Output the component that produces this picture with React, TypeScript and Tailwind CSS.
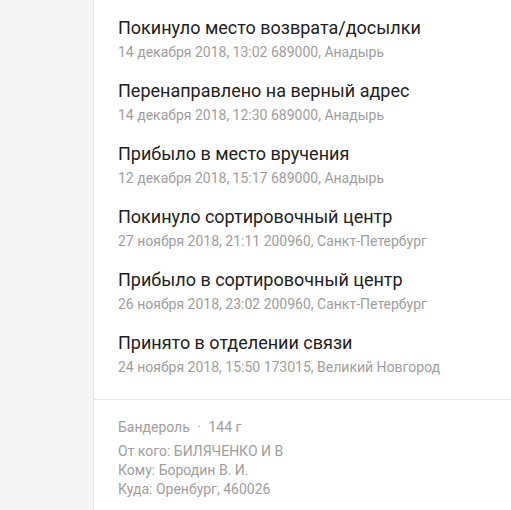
import React from 'react';

interface TrackEvent {
  title: string;
  details: string;
}

const events: TrackEvent[] = [
  { title: 'Покинуло место возврата/досылки', details: '14 декабря 2018, 13:02 689000, Анадырь' },
  { title: 'Перенаправлено на верный адрес', details: '14 декабря 2018, 12:30 689000, Анадырь' },
  { title: 'Прибыло в место вручения', details: '12 декабря 2018, 15:17 689000, Анадырь' },
  { title: 'Покинуло сортировочный центр', details: '27 ноября 2018, 21:11 200960, Санкт-Петербург' },
  { title: 'Прибыло в сортировочный центр', details: '26 ноября 2018, 23:02 200960, Санкт-Петербург' },
  { title: 'Принято в отделении связи', details: '24 ноября 2018, 15:50 173015, Великий Новгород' },
];

const App: React.FC = () => {
  return (
    <div className="flex min-h-[510px] w-full bg-white font-['Roboto',sans-serif]">
      <aside className="w-[94px] shrink-0 border-r border-[#e6e6e6] bg-[#f5f5f5]" />

      <main className="flex-1">
        <ul className="flex flex-col gap-[21px] px-[24px] pt-[18px] pb-[24px]">
          {events.map((event) => (
            <li key={event.title} className="flex flex-col gap-[6px]">
              <span className="text-[18px] leading-[20px] text-[#212121]">{event.title}</span>
              <span className="text-[14px] leading-[16px] text-[#9e9e9e]">{event.details}</span>
            </li>
          ))}
        </ul>

        <div className="border-t border-[#e6e6e6] px-[24px] pt-[19px] text-[14px] text-[#9e9e9e]">
          <p className="leading-[16px]">
            Бандероль <span className="mx-[4px]">·</span> 144 г
          </p>
          <div className="mt-[7px] leading-[19px]">
            <p>От кого: БИЛЯЧЕНКО И В</p>
            <p>Кому: Бородин В. И.</p>
            <p>Куда: Оренбург, 460026</p>
          </div>
        </div>
      </main>
    </div>
  );
};

export default App;
